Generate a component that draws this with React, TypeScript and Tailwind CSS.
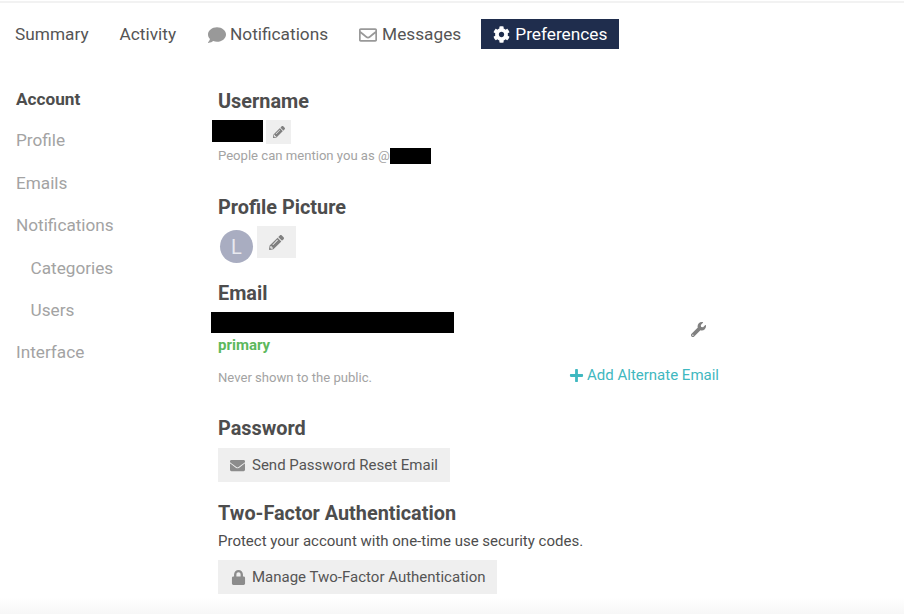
import { FaComment, FaRegEnvelope, FaCog, FaPencilAlt, FaWrench, FaPlus, FaEnvelope, FaLock } from "react-icons/fa";

const sideLinks = [
  { label: "Profile", indent: false },
  { label: "Emails", indent: false },
  { label: "Notifications", indent: false },
  { label: "Categories", indent: true },
  { label: "Users", indent: true },
  { label: "Interface", indent: false },
];

function Heading({ children }: { children: string }) {
  return <h2 className="text-[19.85px] leading-[24px] font-bold text-[#4d4d4d]">{children}</h2>;
}

export default function App() {
  return (
    <div className="h-[614px] w-[904px] overflow-hidden bg-white font-['Roboto',sans-serif] text-[#4d4d4d] flex flex-col">
      <div className="h-[2px] mt-[1px] bg-[#f2f2f2]" />

      {/* top tabs */}
      <nav className="mt-[16px] ml-[15px] flex items-center h-[30px] text-[17.25px] text-[#555]">
        <a className="mr-[31px] pt-[1px]">Summary</a>
        <a className="mr-[32px] pt-[1px]">Activity</a>
        <a className="mr-[31px] pt-[1px] flex items-center gap-[4px]">
          <FaComment className="text-[#999] text-[18px]" />
          Notifications
        </a>
        <a className="mr-[20px] pt-[1px] flex items-center gap-[5px]">
          <FaRegEnvelope className="text-[#999] text-[18px]" />
          Messages
        </a>
        <a className="flex h-[30px] pt-[1px] items-center gap-[5px] bg-[#1f2d4d] px-[12px] text-white">
          <FaCog className="text-[17px]" />
          Preferences
        </a>
      </nav>

      <div className="flex mt-[38px] flex-1">
        {/* sidebar */}
        <aside className="w-[218px] pl-[16px] text-[17.2px]">
          <div className="h-[24px] mb-[-1px] leading-[24px] font-bold text-[#4d4d4d]">Account</div>
          {sideLinks.map((l) => (
            <div
              key={l.label}
              className={l.indent ? "mt-[18.4px] h-[24px] leading-[24px] pl-[14.5px] text-[#a3a3a3]" : "mt-[18.4px] h-[24px] leading-[24px] text-[#a3a3a3]"}
            >
              {l.label}
            </div>
          ))}
        </aside>

        {/* main */}
        <main className="w-[501px] pt-[3px]">
          <Heading>Username</Heading>
          <div className="mt-[6px] -ml-[6px] flex items-start gap-[3px]">
            <span className="h-[22px] w-[51px] bg-black" />
            <button className="flex h-[24px] w-[25px] items-center justify-center bg-[#efefef] text-[#808080]">
              <FaPencilAlt className="text-[12px]" />
            </button>
          </div>
          <p className="mt-[4px] flex h-[16px] items-center text-[13.1px] text-[#a3a3a3]">
            People can mention you as @<span className="h-[16px] w-[41px] bg-black" />
          </p>

          <div className="mt-[32px]">
            <Heading>Profile Picture</Heading>
          </div>
          <div className="mt-[6px] ml-[2px] flex items-start">
            <div className="mt-[4px] flex h-[33px] w-[33px] items-center justify-center rounded-full bg-[#a9adc1] text-[20px] text-[#e8e9ef]">
              L
            </div>
            <button className="ml-[4px] flex h-[32px] w-[39px] items-center justify-center bg-[#efefef] text-[#808080]">
              <FaPencilAlt className="text-[15px]" />
            </button>
          </div>

          <div className="mt-[19px]">
            <Heading>Email</Heading>
          </div>
          <div className="mt-[6px] -ml-[7px] flex items-start justify-between">
            <span className="h-[21px] w-[243px] bg-black" />
            <FaWrench className="mt-[10px] mr-[13px] text-[15px] text-[#808080]" />
          </div>
          <div className="-mt-[2px] text-[15px] leading-[20px] font-bold text-[#5cb85c]">primary</div>
          <div className="mt-[10px] flex items-start justify-between">
            <span className="mt-[5px] text-[13.1px] leading-[16px] text-[#a3a3a3]">Never shown to the public.</span>
            <a className="flex items-center gap-[3px] text-[15px] leading-[20px] text-[#3fb8c0]">
              <FaPlus className="text-[15px]" />
              Add Alternate Email
            </a>
          </div>

          <div className="mt-[31px]">
            <Heading>Password</Heading>
          </div>
          <button className="mt-[7px] flex h-[34px] items-center gap-[7px] bg-[#efefef] pl-[12px] pr-[12px] text-[15px] text-[#555]">
            <FaEnvelope className="text-[15px] text-[#8c8c8c]" />
            Send Password Reset Email
          </button>

          <div className="mt-[20px]">
            <Heading>Two-Factor Authentication</Heading>
          </div>
          <p className="mt-[5px] text-[15px] leading-[20px] text-[#4d4d4d]">
            Protect your account with one-time use security codes.
          </p>
          <button className="mt-[9px] flex h-[34px] items-center gap-[6px] bg-[#efefef] pl-[13px] pr-[11px] text-[15px] text-[#555]">
            <FaLock className="text-[15px] text-[#8c8c8c]" />
            Manage Two-Factor Authentication
          </button>
        </main>
      </div>

      {/* fade along the bottom edge */}
      <div className="absolute left-0 top-[598px] h-[16px] w-[904px] bg-gradient-to-b from-white to-[#f7f7f7]" />
    </div>
  );
}
